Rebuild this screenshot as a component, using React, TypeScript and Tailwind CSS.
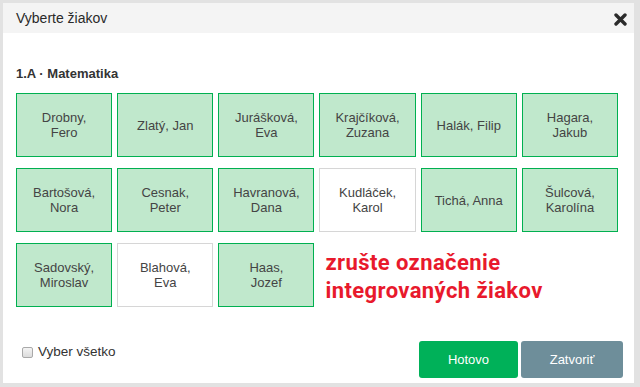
import React from 'react';

type Student = { name: string; selected: boolean };

const students: Student[] = [
  { name: 'Drobny,\nFero', selected: true },
  { name: 'Zlatý, Jan', selected: true },
  { name: 'Jurášková,\nEva', selected: true },
  { name: 'Krajčíková,\nZuzana', selected: true },
  { name: 'Halák, Filip', selected: true },
  { name: 'Hagara,\nJakub', selected: true },
  { name: 'Bartošová,\nNora', selected: true },
  { name: 'Cesnak,\nPeter', selected: true },
  { name: 'Havranová,\nDana', selected: true },
  { name: 'Kudláček,\nKarol', selected: false },
  { name: 'Tichá, Anna', selected: true },
  { name: 'Šulcová,\nKarolína', selected: true },
  { name: 'Sadovský,\nMiroslav', selected: true },
  { name: 'Blahová,\nEva', selected: false },
  { name: 'Haas,\nJozef', selected: true },
];

const StudentCard: React.FC<{ student: Student }> = ({ student }) => (
  <button
    className={
      student.selected
        ? 'h-[64px] flex items-center justify-center border border-[#00b050] bg-[#c0e8cc] text-[13px] leading-[15px] text-[#444] whitespace-pre-line text-center'
        : 'h-[64px] flex items-center justify-center border border-[#d6d6d6] bg-white text-[13px] leading-[15px] text-[#444] whitespace-pre-line text-center'
    }
  >
    {student.name}
  </button>
);

const CloseIcon = () => (
  <svg width="13" height="13" viewBox="0 0 13 13" className="block">
    <path d="M2 2 L11 11 M11 2 L2 11" stroke="#2b2b2b" strokeWidth="3.4" strokeLinecap="round" />
  </svg>
);

export default function App() {
  return (
    <div
      className="w-[640px] h-[387px] bg-[#e2e2e2] pl-[3px] pt-[3px] pr-[6px] pb-[4px]"
      style={{ fontFamily: '"Liberation Sans", Arial, sans-serif' }}
    >
      <div className="w-full h-full bg-white flex flex-col">
        <div className="h-[30px] bg-[#f4f4f4] flex items-center justify-between pl-[13px] pr-[7px] shrink-0">
          <span className="text-[14px] text-[#2a2a2a]">Vyberte žiakov</span>
          <span className="mt-[3px]">
            <CloseIcon />
          </span>
        </div>

        <div className="px-[13px] pt-[33px]">
          <div className="text-[13px] leading-[16px] font-bold text-[#333] mb-[11px]">1.A · Matematika</div>
          <div className="w-[602px] grid grid-cols-6 gap-x-[5px] gap-y-[11px]">
            {students.map((s) => (
              <StudentCard key={s.name} student={s} />
            ))}
            <div
              className="col-span-3 flex flex-col justify-center pl-[6px] pt-[3px] text-[22px] leading-[28px] font-bold tracking-[0.4px] text-[#e8192c]"
              style={{ fontFamily: 'Roboto, "Noto Sans", sans-serif' }}
            >
              <span>zrušte označenie</span>
              <span>integrovaných žiakov</span>
            </div>
          </div>
        </div>

        <div className="mt-[34px] flex items-start justify-between pl-[19px] pr-[11px]">
          <label className="mt-[1px] flex items-center gap-[5px] text-[13.5px] text-[#333]">
            <span className="w-[11px] h-[11px] rounded-[2px] border border-[#a9a9a9] bg-gradient-to-b from-[#f4f4f4] to-[#dcdcdc]" />
            Vyber všetko
          </label>
          <div className="flex gap-[3px]">
            <button className="w-[99px] h-[37px] rounded-[3px] bg-[#00b159] text-white text-[13px]">Hotovo</button>
            <button className="w-[102px] h-[37px] rounded-[3px] bg-[#6e8e9a] text-white text-[13px]">Zatvoriť</button>
          </div>
        </div>
      </div>
    </div>
  );
}
